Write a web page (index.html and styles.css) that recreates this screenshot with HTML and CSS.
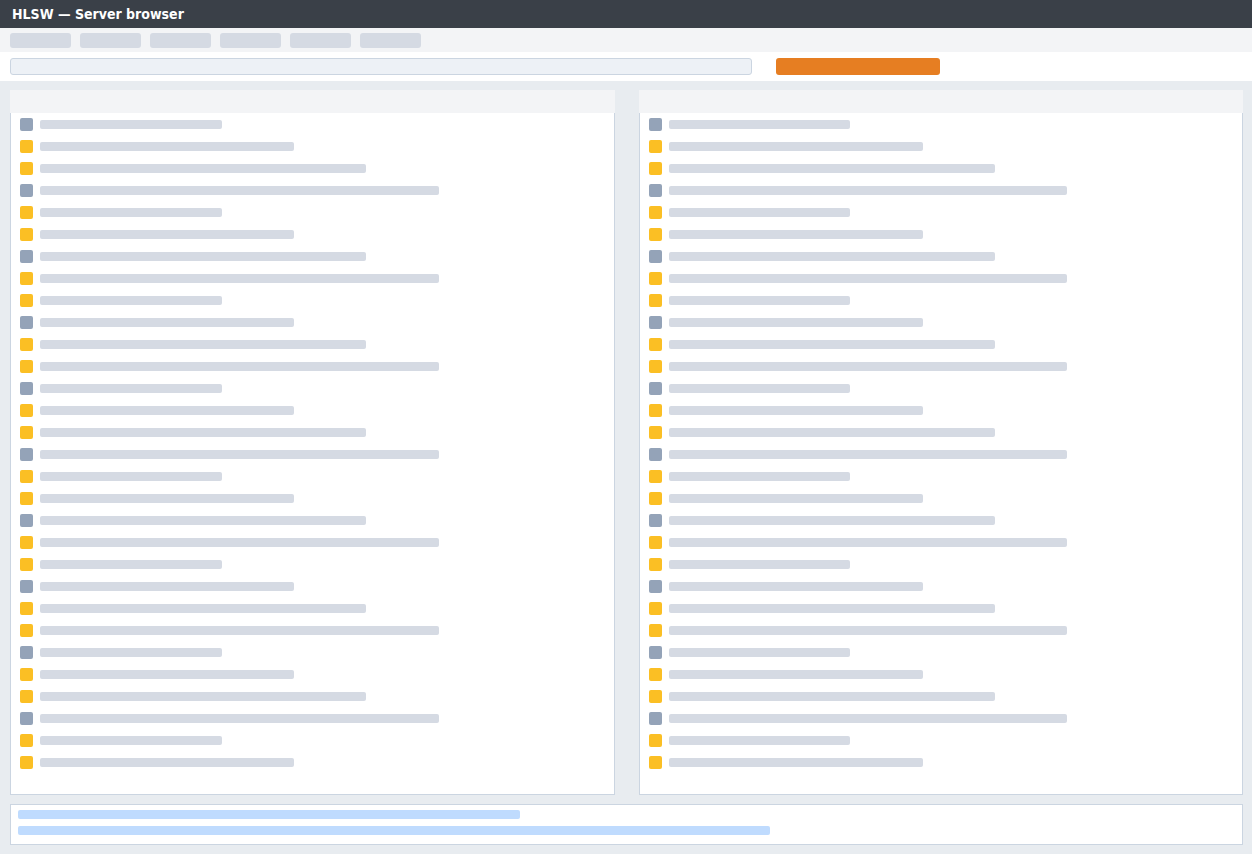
FILE: index.html
```html
<!DOCTYPE html>
<html lang="en">
  <head>
    <meta charset="UTF-8">
    <meta name="viewport" content="width=device-width, initial-scale=1">
    <title>HLSW — Server browser</title>
    <link rel="stylesheet" href="styles.css">
  </head>

  <body>
    <header class="titlebar">
      <h1>HLSW — Server browser</h1>
    </header>

    <nav class="menubar">
      <button type="button" aria-label="Menu 1"></button>
      <button type="button" aria-label="Menu 2"></button>
      <button type="button" aria-label="Menu 3"></button>
      <button type="button" aria-label="Menu 4"></button>
      <button type="button" aria-label="Menu 5"></button>
      <button type="button" aria-label="Menu 6"></button>
    </nav>

    <form class="toolbar">
      <input type="text" class="address" aria-label="Server address">
      <button type="button" class="connect" aria-label="Connect"></button>
    </form>

    <main class="content">
      <div class="panels">
        <section class="panel">
          <div class="panel-header"></div>
          <ul class="rows">
            <li></li><li></li><li></li><li></li><li></li>
            <li></li><li></li><li></li><li></li><li></li>
            <li></li><li></li><li></li><li></li><li></li>
            <li></li><li></li><li></li><li></li><li></li>
            <li></li><li></li><li></li><li></li><li></li>
            <li></li><li></li><li></li><li></li><li></li>
          </ul>
        </section>

        <section class="panel">
          <div class="panel-header"></div>
          <ul class="rows">
            <li></li><li></li><li></li><li></li><li></li>
            <li></li><li></li><li></li><li></li><li></li>
            <li></li><li></li><li></li><li></li><li></li>
            <li></li><li></li><li></li><li></li><li></li>
            <li></li><li></li><li></li><li></li><li></li>
            <li></li><li></li><li></li><li></li><li></li>
          </ul>
        </section>
      </div>

      <!-- LOG -->
      <section class="log">
        <div class="log-line"></div>
        <div class="log-line long"></div>
      </section>
    </main>
  </body>
</html>
```

FILE: styles.css
```css
* {
  box-sizing: border-box;
}

body {
  display: flex;
  flex-direction: column;
  min-height: 100vh;
  margin: 0;
  background: #e8ecf0;
  font-family: "DejaVu Sans Condensed", "DejaVu Sans", sans-serif;
}

button,
input {
  margin: 0;
  padding: 0;
  border: 0;
}

button {
  cursor: pointer;
}

.titlebar {
  padding: 0 12px;
  background: #3a4048;
  color: white;
}

.titlebar h1 {
  margin: 0;
  font-size: 14px;
  font-weight: bold;
  line-height: 28px;
}

/* Menu */
.menubar {
  display: flex;
  gap: 9px;
  padding: 5px 10px 4px;
  background: #f3f4f6;
}

.menubar button {
  width: 61px;
  height: 15px;
  border-radius: 3px;
  background: #d5dae3;
}

/* Toolbar */
.toolbar {
  display: flex;
  gap: 24px;
  padding: 6px 9px 6px 10px;
  background: white;
}

.address {
  width: calc(60% + 2px);
  height: 17px;
  padding: 0 6px;
  border: 1px solid #cbd5e1;
  border-radius: 3px;
  background: #edf1f6;
  font-size: 11px;
}

.connect {
  width: calc(13% + 4px);
  height: 17px;
  border-radius: 3px;
  background: #e67e22;
}

/* Server lists */
.content {
  display: flex;
  flex: 1;
  flex-direction: column;
  gap: 9px;
  padding: 9px 9px 9px 10px;
}

.panels {
  display: grid;
  flex: 1;
  grid-template-columns: 1fr 1fr;
  gap: 24px;
}

.panel {
  border: 1px solid #cbd5e1;
  background: white;
}

.panel-header {
  height: 23px;
  margin: -1px -1px 0;
  background: #f3f4f6;
}

.rows {
  margin: 0;
  padding: 0;
  list-style: none;
}

.rows li {
  display: flex;
  align-items: center;
  gap: 7px;
  height: 22px;
}

.rows li::before {
  content: "";
  width: 13px;
  height: 13px;
  margin-left: 9px;
  border-radius: 2px;
  background: #fbbf24;
}

.rows li:nth-child(3n+1)::before {
  background: #94a3b8;
}

.rows li::after {
  content: "";
  width: calc(30% + 1px);
  height: 9px;
  border-radius: 2px;
  background: #d5dae3;
}

.rows li:nth-child(4n+2)::after {
  width: calc(42% + 1px);
}

.rows li:nth-child(4n+3)::after {
  width: calc(54% + 1px);
}

.rows li:nth-child(4n)::after {
  width: calc(66% + 1px);
}

/* Log */
.log {
  display: flex;
  flex-direction: column;
  gap: 7px;
  padding: 5px 7px 9px;
  border: 1px solid #cbd5e1;
  background: white;
}

.log-line {
  width: calc(40vw + 1px);
  height: 9px;
  border-radius: 2px;
  background: #bfdbfe;
}

.log-line.long {
  width: calc(60vw + 1px);
}
```
